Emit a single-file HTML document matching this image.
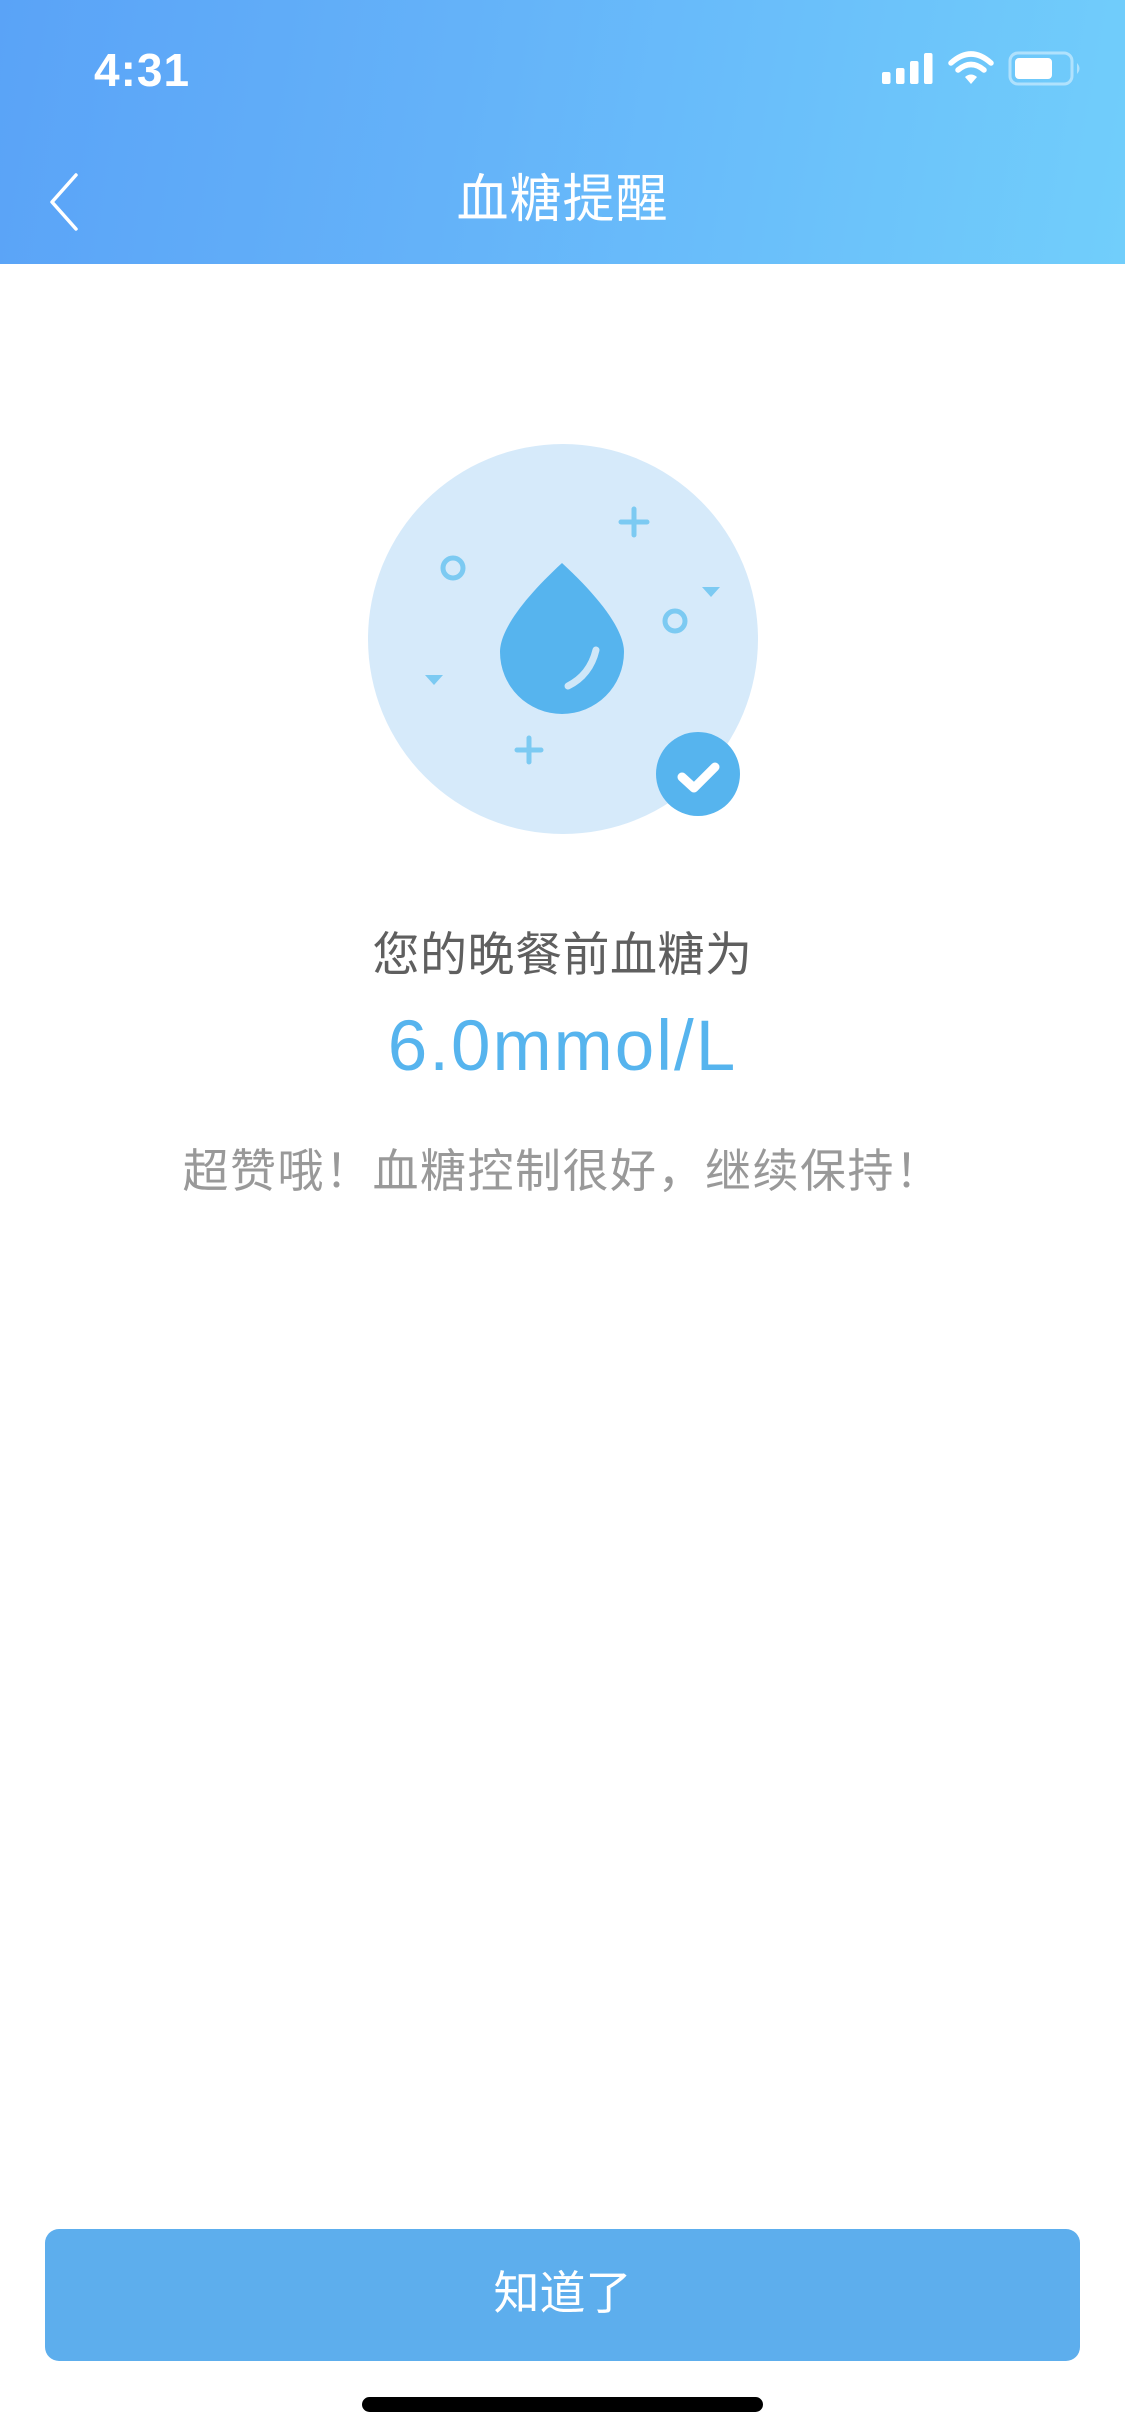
<!DOCTYPE html>
<html><head><meta charset="utf-8"><style>
*{margin:0;padding:0;box-sizing:border-box}
html,body{width:1125px;height:2436px;background:#fff;overflow:hidden;font-family:"Liberation Sans","Noto Sans CJK SC",sans-serif}
.hdr{position:absolute;left:0;top:0;width:1125px;height:264px;background:linear-gradient(100deg,#5aa3f7 0%,#64b2f9 40%,#71cefb 100%)}
.abs{position:absolute}
.t{position:absolute;left:0;width:1125px;text-align:center;white-space:nowrap}
</style></head><body>
<div class="hdr"></div>
<div class="abs" style="left:94px;top:40px;font-size:46px;color:#fff;font-weight:bold;letter-spacing:1px;line-height:60px">4:31</div>
<svg class="abs" style="left:0;top:0" width="1125" height="264">
 <g fill="#fff">
  <rect x="882" y="72" width="8.5" height="12" rx="2"/>
  <rect x="896" y="68" width="8.5" height="16" rx="2"/>
  <rect x="910" y="61" width="8.5" height="23" rx="2"/>
  <rect x="924" y="53" width="8.5" height="31" rx="2"/>
 </g>
 <g fill="none" stroke="#fff" stroke-width="5.5" stroke-linecap="round">
  <path d="M951 63 Q971 45 991 63"/>
  <path d="M958 70 Q971 59 984 70"/>
 </g>
 <path d="M965 77 Q971 72 977 77 L971 84 Z" fill="#fff"/>
 <rect x="1010" y="53" width="62" height="31" rx="8" fill="none" stroke="#fff" stroke-opacity="0.45" stroke-width="3"/>
 <rect x="1015" y="58" width="37" height="21" rx="4" fill="#fff"/>
 <path d="M1077 63 Q1082 68.5 1077 74 Z" fill="#fff" fill-opacity="0.45"/>
 <path d="M76 175 L52 202 L76 229" fill="none" stroke="#fff" stroke-width="3.5" stroke-linecap="round" stroke-linejoin="round"/>
</svg>
<div class="t" style="top:168px;font-size:52px;line-height:64px;color:#fff;letter-spacing:1px">血糖提醒</div>

<svg class="abs" style="left:0;top:400px" width="1125" height="450" viewBox="0 400 1125 450">
 <circle cx="563" cy="639" r="195" fill="#d6eafa"/>
 <path d="M562 563 C600 598 624 630 624 652 A62 62 0 0 1 500 652 C500 630 524 598 562 563 Z" fill="#56b4ee"/>
 <path d="M596 650 Q590 675 568 686" fill="none" stroke="#cfe7f8" stroke-width="7" stroke-linecap="round"/>
 <g fill="none" stroke="#7ccaf2" stroke-width="5" stroke-linecap="round">
  <circle cx="453" cy="568" r="10"/>
  <circle cx="675" cy="621" r="10"/>
  <path d="M621 522 H647 M634 509 V535"/>
  <path d="M517 750 H541 M529 738 V762"/>
 </g>
 <path d="M702 587 H720 L711 597 Z" fill="#7ccaf2"/>
 <path d="M425 675 H443 L434 685 Z" fill="#7ccaf2"/>
 <circle cx="698" cy="774" r="42" fill="#56b4ee"/>
 <path d="M682 777 L694 788 L715 767" fill="none" stroke="#fff" stroke-width="9" stroke-linecap="round" stroke-linejoin="round"/>
</svg>

<div class="t" style="top:925px;font-size:47px;line-height:60px;color:#5f5f5f;letter-spacing:0.5px">您的晚餐前血糖为</div>
<div class="t" style="top:1002px;font-size:71px;line-height:90px;color:#56b4ee;letter-spacing:2px">6.0mmol/L</div>
<div class="t" style="top:1141px;font-size:46px;line-height:60px;color:#999;letter-spacing:1.5px">超赞哦！血糖控制很好，继续保持！</div>

<div class="abs" style="left:45px;top:2229px;width:1035px;height:132px;border-radius:14px;background:#5daeed"></div>
<div class="t" style="top:2263px;font-size:46px;line-height:60px;color:#fff">知道了</div>
<div class="abs" style="left:362px;top:2397px;width:401px;height:15px;border-radius:8px;background:#000"></div>
</body></html>
